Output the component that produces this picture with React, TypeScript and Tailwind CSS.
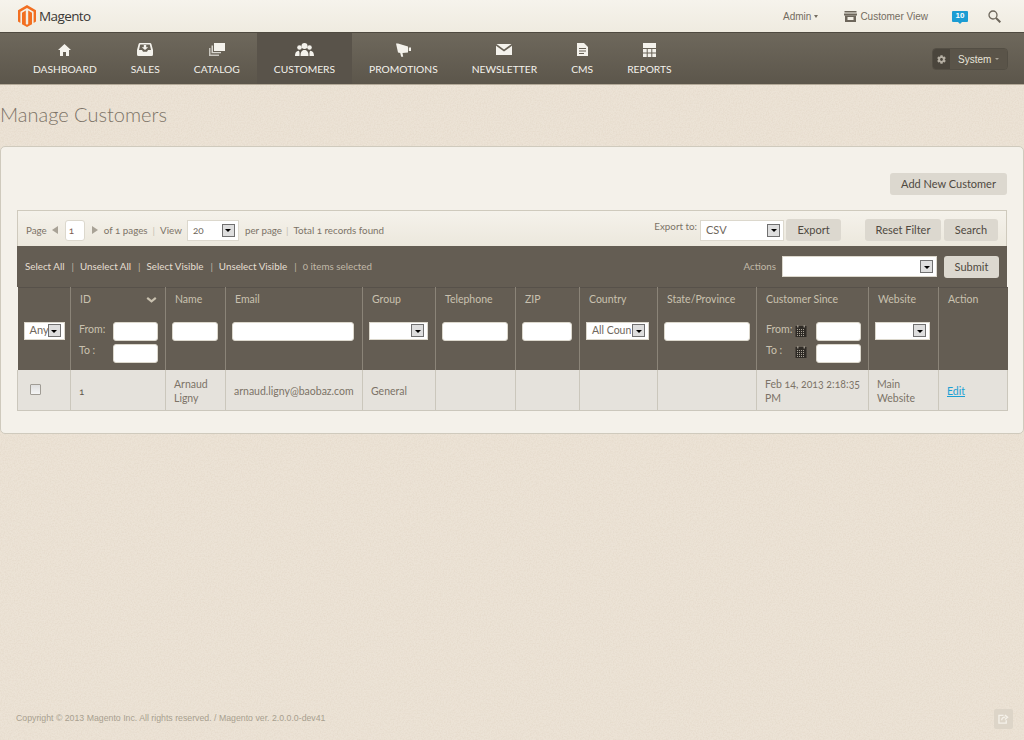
import { FaCog } from "react-icons/fa";

const navItems = [
  { label: "Dashboard", icon: <HomeIcon /> },
  { label: "Sales", icon: <SalesIcon /> },
  { label: "Catalog", icon: <CatalogIcon /> },
  { label: "Customers", icon: <PeopleIcon />, active: true },
  { label: "Promotions", icon: <HornIcon /> },
  { label: "Newsletter", icon: <MailIcon /> },
  { label: "CMS", icon: <DocIcon /> },
  { label: "Reports", icon: <GridIcon /> },
];

const columns = [
  { w: "w-[53px]", label: "" },
  { w: "w-[95px]", label: "ID" },
  { w: "w-[60px]", label: "Name" },
  { w: "w-[137px]", label: "Email" },
  { w: "w-[73px]", label: "Group" },
  { w: "w-[80px]", label: "Telephone" },
  { w: "w-[64px]", label: "ZIP" },
  { w: "w-[78px]", label: "Country" },
  { w: "w-[99px]", label: "State/Province" },
  { w: "w-[112px]", label: "Customer Since" },
  { w: "w-[70px]", label: "Website" },
  { w: "w-[69px]", label: "Action" },
];

function HomeIcon() {
  return (
    <svg viewBox="0 0 13 12" className="h-[12px] w-[13px]" fill="currentColor">
      <path d="M6.500 0L13 6h-2v6H8V8H5v4H2V6H0Z" />
    </svg>
  );
}

function SalesIcon() {
  return (
    <svg viewBox="0 0 16 13" className="h-[13px] w-[16px]" fill="currentColor">
      <path d="M3 0h10a1.500 1.500 0 0 1 1.400 1L16 7v4.500a1.500 1.500 0 0 1-1.500 1.500h-13A1.500 1.500 0 0 1 0 11.500V7l1.600-6A1.500 1.500 0 0 1 3 0Zm.2 1.500L2 7h3l1 1.800h4L11 7h3l-1.200-5.500H3.200Z" fillRule="evenodd" />
      <path d="M6.800 2h2.400v2.200h2L8 7 4.800 4.200h2Z" />
    </svg>
  );
}

function CatalogIcon() {
  return (
    <svg viewBox="0 0 16 13" className="h-[13px] w-[16px]" fill="currentColor">
      <rect x="5" y="0" width="11" height="8" />
      <path d="M2.500 2.500h1.500v6.500h8v1.200H2.500Z" opacity="0.8" />
      <path d="M0 5h1.500v6.500H10V13H0Z" opacity="0.7" />
    </svg>
  );
}

function PeopleIcon() {
  return (
    <svg viewBox="0 0 19 13" className="h-[13px] w-[19px]" fill="currentColor">
      <circle cx="9.500" cy="3" r="3" />
      <path d="M5.500 13c0-3.500 1-6 4-6s4 2.500 4 6Z" />
      <circle cx="4.500" cy="4.500" r="2.300" />
      <path d="M0 13c0-3 1-5 3.800-5.200C4.800 9 4.500 11 4.500 13Z" />
      <circle cx="14.500" cy="4.500" r="2.300" />
      <path d="M19 13c0-3-1-5-3.800-5.200C14.200 9 14.500 11 14.500 13Z" />
    </svg>
  );
}

function HornIcon() {
  return (
    <svg viewBox="0 0 15 14" className="h-[14px] w-[15px]" fill="currentColor">
      <path d="M0 0.500L2 0.500L12 3.500V9.500L6.500 10L7.200 13.800H5.200L4.200 10L2 9.500Z" />
      <rect x="12.800" y="4.500" width="2.200" height="3.500" />
    </svg>
  );
}

function MailIcon() {
  return (
    <svg viewBox="0 0 16 11" className="h-[11px] w-[16px]" fill="currentColor">
      <path d="M0.500 0H15.500L8 5.500Z" />
      <path d="M0 1.800L8 7.500L16 1.800V11H0Z" />
    </svg>
  );
}

function DocIcon() {
  return (
    <svg viewBox="0 0 11 13" className="h-[13px] w-[11px]" fill="currentColor">
      <path d="M0 0H7L11 4V13H0ZM2 5V6H9V5ZM2 7.500V8.500H9V7.500ZM2 10V11H7V10Z" fillRule="evenodd" />
    </svg>
  );
}

function GridIcon() {
  return (
    <svg viewBox="0 0 13 14" className="h-[14px] w-[13px]" fill="currentColor">
      <rect x="0" y="0" width="13" height="5" />
      <path d="M0 6h3.700v3.500H0ZM4.700 6h3.600v3.500H4.700ZM9.300 6H13v3.500H9.300ZM0 10.500h3.700V14H0ZM4.700 10.500h3.600V14H4.700ZM9.300 10.500H13V14H9.300Z" />
    </svg>
  );
}

function MagentoLogo() {
  return (
    <svg viewBox="0 0 18 22" className="h-[22px] w-[18px]" fill="#f26f21">
      <polygon points="9,0 18,5.200 18,16.500 15.600,18 15.600,6.800 9,3 2.400,6.800 2.400,18 0,16.500 0,5.200" />
      <polygon points="4,7.800 7.800,5.600 7.800,19 9,19.800 10.200,19 10.200,5.600 14,7.800 14,19.300 9,22 4,19.300" />
    </svg>
  );
}

function StoreIcon() {
  return (
    <svg viewBox="0 0 13 11" className="h-[11px] w-[13px]" fill="#6d665b">
      <rect x="0.500" y="0" width="12" height="1.500" />
      <rect x="0" y="2.500" width="13" height="2" />
      <path d="M1 4.500h11V11H1Zm2.500 1.500v3h6V6Z" fillRule="evenodd" />
    </svg>
  );
}

function SearchIcon() {
  return (
    <svg viewBox="0 0 13 13" className="size-[13px]" fill="none" stroke="#6d665b">
      <circle cx="5" cy="5" r="4" strokeWidth="1.300" />
      <path d="M8 8l4.300 4.300" strokeWidth="2" />
    </svg>
  );
}

function CalendarIcon({ className }: { className: string }) {
  return (
    <svg viewBox="0 0 12 12" className={`size-[12px] ${className}`}>
      <rect x="0.500" y="1" width="11" height="11" fill="#2f2b26" />
      <rect x="2" y="0" width="1.500" height="2.500" fill="#8f897f" />
      <rect x="8.500" y="0" width="1.500" height="2.500" fill="#8f897f" />
      <path d="M2 4.500h8M2 6.500h8M2 8.500h8M2 10.500h8" stroke="#a8a296" strokeDasharray="1 1" />
    </svg>
  );
}

function Select({ text, className }: { text: string; className: string }) {
  return (
    <div className={`flex items-center justify-between overflow-hidden border border-[#dcd8cd] bg-white pr-[3px] text-[#6f675c] ${className}`}>
      <span className="overflow-hidden pl-[5px] whitespace-nowrap">{text}</span>
      <span className="flex h-[13px] w-[13px] shrink-0 items-center justify-center border border-[#707070] bg-[#dedede]">
        <span className="mt-[1px] h-0 w-0 border-x-[3px] border-t-[3px] border-x-transparent border-t-black" />
      </span>
    </div>
  );
}

function Button({ children, className = "" }: { children: string; className?: string }) {
  return (
    <button className={`h-[22px] rounded-[3px] bg-[#dcd8cf] pb-[1px] text-[11px] leading-none text-[#4f493f] ${className}`}>{children}</button>
  );
}

function FilterInput({ className }: { className: string }) {
  return <input className={`block h-[19px] rounded-[3px] border border-[#dcd8cd] bg-white ${className}`} />;
}

export default function App() {
  return (
    <div className="flex min-h-screen flex-col bg-[#ece3d6] bg-[url('data:image/svg+xml,%3Csvg%20xmlns=%22http://www.w3.org/2000/svg%22%20width=%22256%22%20height=%22256%22%3E%3Cfilter%20id=%22n%22%3E%3CfeTurbulence%20type=%22fractalNoise%22%20baseFrequency=%220.7%22%20numOctaves=%222%22/%3E%3CfeColorMatrix%20values=%220%200%200%200%200.59%200%200%200%200%200.47%200%200%200%200%200.35%200.35%200%200%200%20-0.12%22/%3E%3C/filter%3E%3Crect%20width=%22100%25%22%20height=%22100%25%22%20filter=%22url(%23n)%22/%3E%3C/svg%3E')] font-['Lato',sans-serif] oldstyle-nums">
      <header className="flex h-[32px] items-center bg-gradient-to-b from-[#f6f3ec] to-[#efebe0] pr-[23px] pl-[18px] font-['Liberation_Sans',sans-serif] text-[10px] text-[#746c60]">
        <MagentoLogo />
        <span className="ml-[3px] font-['Open_Sans',sans-serif] text-[13.500px] tracking-[-0.6px] text-[#3a3835]">Magento</span>
        <div className="ml-auto flex items-center">
          <span>Admin</span>
          <span className="ml-[3px] h-0 w-0 border-x-[2.500px] border-t-[3px] border-x-transparent border-t-[#746c60]" />
        </div>
        <div className="ml-[26px] flex items-center">
          <StoreIcon />
          <span className="ml-[3px]">Customer View</span>
        </div>
        <span className="relative ml-[24px] flex h-[11px] w-[16px] items-center justify-center rounded-[1px] bg-[#1b9cd3] text-[8px] font-bold text-white">
          10
          <span className="absolute -bottom-[2px] left-[6px] h-0 w-0 border-x-[2px] border-t-[2px] border-x-transparent border-t-[#1b9cd3]" />
        </span>
        <span className="ml-[20px]">
          <SearchIcon />
        </span>
      </header>

      <nav className="flex h-[53px] border-y border-t-[#4f4a40] border-b-[#b4aa99] bg-gradient-to-b from-[#6e685c] to-[#5c564b] pl-[16px] text-[#f4f2ec]">
        {navItems.map((item) => (
          <a
            key={item.label}
            className={`flex flex-col items-center px-[17px] pt-[7px] text-[10.250px] uppercase ${item.active ? "bg-[#59534a]" : ""}`}
          >
            <span className="flex h-[19px] items-center justify-center">{item.icon}</span>
            <span className="mt-[2px] leading-[16px]">{item.label}</span>
          </a>
        ))}
        <div className="mt-[15px] mr-[16px] ml-auto flex h-[22px] w-[76px] overflow-hidden rounded-[4px] border border-[#534e44] font-['Liberation_Sans',sans-serif] text-[10px] text-[#e8e4da]">
          <span className="flex w-[17px] items-center justify-center bg-[#4a453c] text-[#b5afa3]">
            <FaCog className="size-[9px]" />
          </span>
          <span className="flex flex-1 items-center bg-[#5a5449] pl-[8px]">
            System
            <span className="ml-[4px] h-0 w-0 border-x-[2px] border-t-[2px] border-x-transparent border-t-[#a9a397]" />
          </span>
        </div>
      </nav>

      <h1 className="pt-[16px] pb-[19px] text-[20px] leading-[26px] font-light text-[#7c7367]">Manage Customers</h1>

      <main className="h-[288px] rounded-[5px] border border-[#cfcabd] bg-[#f4f1ea] px-[16px] pt-[26px]">
        <div className="flex justify-end">
          <Button className="w-[117px]">Add New Customer</Button>
        </div>

        <div className="mt-[15px] flex h-[36px] items-center border border-b-0 border-[#cfcabd] bg-gradient-to-b from-[#f5f2eb] to-[#ece8dd] px-[8px] pt-[3px] text-[9.800px] text-[#7c7367]">
          <span>Page</span>
          <span className="ml-[5px] h-0 w-0 border-y-[4px] border-r-[6px] border-y-transparent border-r-[#a8a296]" />
          <input
            defaultValue="1"
            className="ml-[7px] h-[21px] w-[20px] rounded-[3px] border border-[#dcd8cd] bg-white pl-[3px] text-[10px] text-[#7c5a50]"
          />
          <span className="ml-[7px] h-0 w-0 border-y-[4px] border-l-[6px] border-y-transparent border-l-[#a8a296]" />
          <span className="ml-[6px]">of 1 pages</span>
          <span className="ml-[5px] text-[#c5bfb2]">|</span>
          <span className="ml-[5px]">View</span>
          <Select text="20" className="ml-[5px] h-[21px] w-[52px] text-[10px]" />
          <span className="ml-[6px]">per page</span>
          <span className="ml-[4px] text-[#c5bfb2]">|</span>
          <span className="ml-[5px]">Total 1 records found</span>

          <span className="mb-[8px] ml-auto">Export to:</span>
          <Select text="CSV" className="ml-[3px] h-[21px] w-[84px] text-[11px]" />
          <Button className="ml-[2px] w-[55px]">Export</Button>
          <Button className="ml-[24px] w-[76px]">Reset Filter</Button>
          <Button className="ml-[3px] w-[54px]">Search</Button>
        </div>

        <div className="flex h-[41px] items-center bg-[#645d53] px-[8px] text-[9.800px] text-[#e4dfd2]">
          <span>Select All</span>
          <span className="mr-[6px] ml-[7px] text-[#c1b9a8]">|</span>
          <span>Unselect All</span>
          <span className="mr-[6px] ml-[7px] text-[#c1b9a8]">|</span>
          <span>Select Visible</span>
          <span className="mr-[6px] ml-[7px] text-[#c1b9a8]">|</span>
          <span>Unselect Visible</span>
          <span className="mr-[6px] ml-[7px] text-[#c1b9a8]">|</span>
          <span className="text-[#c1b9a8]">0 items selected</span>
          <span className="ml-auto text-[#c1b9a8]">Actions</span>
          <Select text="" className="ml-[6px] h-[21px] w-[155px]" />
          <Button className="ml-[7px] w-[55px]">Submit</Button>
        </div>

        <table className="w-[990px] table-fixed border-collapse text-[10.500px]">
          <colgroup>
            {columns.map((c, i) => (
              <col key={i} className={c.w} />
            ))}
          </colgroup>
          <thead className="border-t border-[#57514a] bg-[#645d53] text-[#c9c1af]">
            <tr>
              {columns.map((c, i) => (
                <th key={i} className="h-[23px] border-l border-[#8b8478] pt-[4px] pl-[9px] text-left align-top font-normal first:border-l-0">
                  {c.label === "ID" ? (
                    <span className="flex items-center justify-between pr-[8px]">
                      ID
                      <svg viewBox="0 0 12 7" className="h-[6px] w-[11px]" fill="none" stroke="#c9c1af" strokeWidth="2.500">
                        <path d="M1 1l5 4 5-4" />
                      </svg>
                    </span>
                  ) : (
                    c.label
                  )}
                </th>
              ))}
            </tr>
            <tr className="h-[59px] align-top">
              <th className="pt-[11px] pl-[6px] font-normal">
                <Select text="Any" className="h-[18px] w-[41px] text-[11px]" />
              </th>
              <th className="border-l border-[#8b8478] pt-[11px] pr-[7px] pl-[8px] font-normal">
                <div className="flex justify-between">
                  <span className="leading-[15px]">From:</span>
                  <FilterInput className="w-[45px]" />
                </div>
                <div className="mt-[3px] flex justify-between">
                  <span className="leading-[13px]">To :</span>
                  <FilterInput className="w-[45px]" />
                </div>
              </th>
              <th className="border-l border-[#8b8478] pt-[11px] pl-[6px]"><FilterInput className="w-[46px]" /></th>
              <th className="border-l border-[#8b8478] pt-[11px] pl-[6px]"><FilterInput className="w-[122px]" /></th>
              <th className="border-l border-[#8b8478] pt-[11px] pl-[6px] font-normal"><Select text="" className="h-[18px] w-[59px]" /></th>
              <th className="border-l border-[#8b8478] pt-[11px] pl-[6px]"><FilterInput className="w-[66px]" /></th>
              <th className="border-l border-[#8b8478] pt-[11px] pl-[6px]"><FilterInput className="w-[50px]" /></th>
              <th className="border-l border-[#8b8478] pt-[11px] pl-[6px] font-normal"><Select text="All Coun" className="h-[18px] w-[63px] text-[10.500px]" /></th>
              <th className="border-l border-[#8b8478] pt-[11px] pl-[6px]"><FilterInput className="w-[86px]" /></th>
              <th className="border-l border-[#8b8478] pt-[11px] pr-[7px] pl-[9px] font-normal">
                <div className="flex">
                  <span className="w-[29px] text-left leading-[15px]">From:</span>
                  <CalendarIcon className="mt-[3px]" />
                  <FilterInput className="ml-auto w-[45px]" />
                </div>
                <div className="mt-[3px] flex">
                  <span className="w-[29px] text-left leading-[13px]">To :</span>
                  <CalendarIcon className="mt-[2px]" />
                  <FilterInput className="ml-auto w-[45px]" />
                </div>
              </th>
              <th className="border-l border-[#8b8478] pt-[11px] pl-[6px] font-normal"><Select text="" className="h-[18px] w-[55px]" /></th>
              <th className="border-l border-[#8b8478]" />
            </tr>
          </thead>
          <tbody>
            <tr className="h-[41px] border-b border-[#cbc7bc] bg-[#e5e2dc] text-[#7c7367] [&>td]:border-l [&>td]:border-[#cbc7bc] [&>td]:pt-[3px] [&>td]:pl-[8px] [&>td]:leading-[14px]">
              <td>
                <span className="-mt-[4px] ml-[4px] block size-[11px] rounded-[1px] border border-[#a09c95] bg-gradient-to-b from-[#dfdfdf] to-[#f4f4f4]" />
              </td>
              <td className="text-[10px] text-[#5f574c]">1</td>
              <td>Arnaud Ligny</td>
              <td className="whitespace-nowrap">arnaud.ligny@baobaz.com</td>
              <td>General</td>
              <td />
              <td />
              <td />
              <td />
              <td>Feb 14, 2013 2:18:35 PM</td>
              <td>Main Website</td>
              <td className="shadow-[inset_-1px_0_0_#cbc7bc]">
                <a className="text-[#1ba0d4] underline">Edit</a>
              </td>
            </tr>
          </tbody>
        </table>
      </main>

      <footer className="mt-auto flex h-[44px] items-start justify-between pr-[11px] pl-[16px] font-['Liberation_Sans',sans-serif] text-[8.750px] text-[#a89f8f]">
        <span className="mt-[16px]">Copyright © 2013 Magento Inc. All rights reserved. / Magento ver. 2.0.0.0-dev41</span>
        <span className="mt-[13px] flex h-[20px] w-[19px] items-center justify-center rounded-[2px] bg-[#ddd5c8]">
          <svg viewBox="0 0 12 11" className="h-[10px] w-[11px]" fill="none" stroke="#f5f1e9" strokeWidth="1.500">
            <path d="M6 1.500H1v8.500h8V7" />
            <path d="M4 7c0-2.500 2-3.500 4-3.500M7.500 1l3 2.500-3 2.500" />
          </svg>
        </span>
      </footer>
    </div>
  );
}
